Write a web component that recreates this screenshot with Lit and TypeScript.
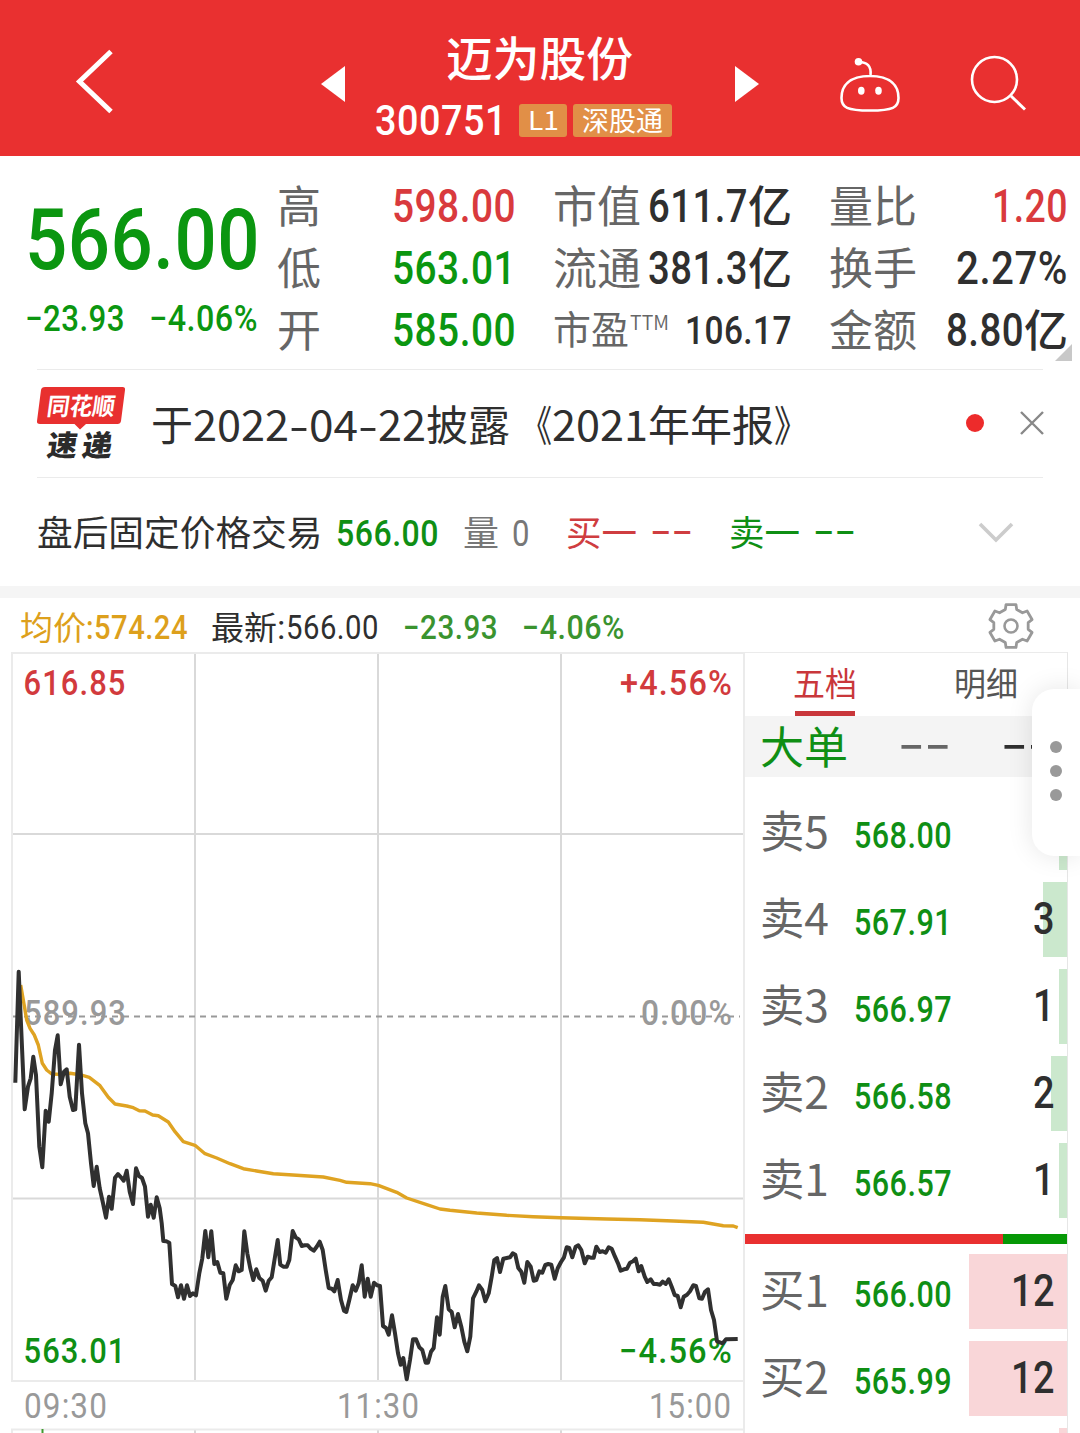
import { LitElement, html, svg, css, nothing } from "lit";
import { customElement } from "lit/decorators.js";

type Series = { ox: number; oy: number; pts: string };

/* One run of text fitted to a fixed advance width. */
const run = (text: string, width: number, size: number, cls = "", height = size) => html`
  <svg class="run ${cls}" width=${width} height=${height}>
    <text x="0" y=${height / 2 + size * (cls.includes("cjk") ? 0.38 : 0.356)} font-size=${size}
      textLength=${width} lengthAdjust="spacingAndGlyphs">${text}</text>
  </svg>`;

/* Series are recorded in thirds of a pixel, relative to the origin of each segment. */
const toPoints = (list: Series[]) =>
  list
    .map((s) =>
      s.pts
        .trim()
        .split(/\s+/)
        .map((p) => {
          const [x, y] = p.split(",").map(Number);
          return `${(s.ox + x / 3).toFixed(1)},${(s.oy + y / 3).toFixed(1)}`;
        })
        .join(" "),
    )
    .join(" ");

const PRICE: Series[] = [
  { ox: 0, oy: 950, pts: `46,398 56,65 74,478 84,410 92,385 100,320 108,375 118,590 127,652 137,482 146,515 155,430 165,300 173,256 182,403 192,365 200,358 209,440 219,480 226,478 237,284 246,430 256,520 264,550 273,640 281,708 290,650 299,715 308,755 318,803 327,740 335,776 345,683 354,672 363,682 371,692 380,662 389,725 399,762 408,655 417,678 426,684 435,710 444,800 452,764 461,803 470,742 479,775 485,820` },
  { ox: 150, oy: 1130, pts: `40,333 49,334 58,338 66,462 76,468 84,502 93,466 102,506 111,466 120,498 129,490 138,496 148,430 157,385 166,303 175,382 184,304 193,402 202,396 211,428 220,430 229,506 239,465 248,450 257,406 266,424 275,420 283,304 292,370 301,415 310,450 319,418 328,444 338,452 347,482 356,452 365,442 375,380 383,330 391,404 400,410 410,410 418,390 428,303 437,322 446,328 455,348 464,346 473,346 482,356 491,362 500,350 509,335 518,360 527,420 536,474 545,476 553,484 563,450 573,510 582,542 589,546 598,510 608,466 617,482 626,460 635,406 644,500 653,446 662,500 672,458 681,466 690,468 699,588 708,594 716,614 726,556 735,610 744,670 752,704 760,684 770,748 780,690 789,628 798,628 808,652 817,660 827,698 834,698 843,665 851,654 861,562 869,614 878,500` },
  { ox: 440, oy: 1180, pts: `16,318 26,388 35,396 44,442 54,402 64,440 73,485 82,514 91,470 99,355 109,335 117,316 127,330 136,364 146,340 155,290 163,240 171,234 180,276 190,236 200,234 210,232 218,220 226,224 235,264 244,275 253,308 262,246 272,260 281,302 289,300 298,274 307,278 316,255 325,252 334,254 344,296 353,265 363,246 372,232 380,202 388,204 397,232 407,200 415,196 424,210 434,250 443,230 452,233 461,233 469,200 479,216 488,214 497,218 506,202 515,206 525,230 534,250 542,272 552,268 561,266 570,248 579,244 587,236 596,274 604,258 614,290 622,306 632,298 641,312 650,312 660,314 668,305 677,312 686,298 695,320 704,345 713,348 722,382 731,350 741,344 750,334 760,316 768,318 778,355 786,356 795,335 804,328 813,390 822,420 831,484 848,490 858,478 893,477` },
];

const AVERAGE: Series[] = [
  { ox: 0, oy: 950, pts: `62,105 70,150 80,210 90,235 103,255 115,285 127,340 140,360 155,372 180,373 210,370 240,374 268,382 300,407 325,442 345,462 380,468 400,473 418,482 435,483 458,495 475,497 505,516 525,545` },
  { ox: 150, oy: 1130, pts: `100,35 135,46 165,71 200,84 240,101 280,116 320,123 370,131 440,136 520,141 570,151 590,157 660,161 685,166 740,187 770,204 830,224 870,237` },
  { ox: 440, oy: 1180, pts: `30,91 110,99 200,106 280,110 363,113 500,117 600,119 700,123 790,127 850,137 880,138 893,143` },
];

const GEAR = Array.from({ length: 6 }, (_, k) =>
  [[17.5, -19], [22, -13], [22, 13], [17.5, 19]]
    .map(([r, d]) => {
      const a = ((k * 60 - 90 + d) * Math.PI) / 180;
      return `${(24 + r * Math.cos(a)).toFixed(2)},${(24 + r * Math.sin(a)).toFixed(2)}`;
    })
    .join(" "),
).join(" ");

const runStyles = css`
  svg { display: block; flex: none; }
  .run { overflow: visible; fill: currentColor; font-family: Roboto, "Noto Sans CJK SC", sans-serif; font-weight: 500; letter-spacing: 0.035em; }
  .cjk { font-family: "Noto Sans CJK SC", sans-serif; font-weight: 400; letter-spacing: 0; }
`;

@customElement("quote-header")
class QuoteHeader extends LitElement {
  static styles = [runStyles, css`
    :host { display: flex; height: 156px; background: #e93030; color: #fff; }
    .medium { font-weight: 500; }
    .prev { margin-left: 190px; }
    .names { display: flex; flex-direction: column; padding-top: 34px; width: 300px; }
    .title { padding-left: 71px; height: 65px; }
    .codes { display: flex; align-items: center; gap: 6px; height: 42px; }
    .badge { display: flex; align-items: center; justify-content: center; box-sizing: border-box; height: 33px; border-radius: 3px; background: #e18f47; }
    .l1 { width: 48px; margin-left: 6px; }
    .link { width: 99px; }
  `];
  render() {
    return html`
      <svg width="120" height="156" viewBox="0 0 120 156"><path d="M111 51.5 79.5 81.5 111 111.5" fill="none" stroke="#fff" stroke-width="5" /></svg>
      <svg class="prev" width="65" height="156" viewBox="310 0 65 156"><path d="M321 84 345 66V102Z" fill="#fff" /></svg>
      <div class="names">
        <div class="title">${run("迈为股份", 187, 46.5, "cjk medium", 48)}</div>
        <div class="codes">
          ${run("300751", 132, 42)}
          <span class="badge l1">${run("L1", 31, 26, "cjk")}</span>
          <span class="badge link">${run("深股通", 81, 27, "cjk")}</span>
        </div>
      </div>
      <svg width="125" height="156" viewBox="675 0 125 156"><path d="M759 84 735 66V102Z" fill="#fff" /></svg>
      <svg width="130" height="156" viewBox="800 0 130 156">
        <path d="M870 76C891 76 898.500 86 898.500 98 898.500 107.500 893 110.500 870 110.500 847 110.500 841.500 107.500 841.500 98 841.500 86 849 76 870 76ZM870.500 75C871.500 66 867 62 859 62" fill="none" stroke="#fff" stroke-width="2.600" />
        <circle cx="858.500" cy="61.800" r="3.800" fill="#fff" />
        <ellipse cx="861.300" cy="90.700" rx="3.300" ry="4" fill="#fff" /><ellipse cx="878.500" cy="90.700" rx="3.300" ry="4" fill="#fff" />
      </svg>
      <svg width="110" height="156" viewBox="930 0 110 156"><path d="M1011 96 1025 109.500" stroke="#fff" stroke-width="3" /><circle cx="994.500" cy="79.500" r="22.500" fill="none" stroke="#fff" stroke-width="2.600" /></svg>
    `;
  }
}

@customElement("quote-stats")
class QuoteStats extends LitElement {
  static styles = [runStyles, css`
    :host { display: flex; height: 213px; color: #2f2f2f; position: relative; }
    .medium { font-weight: 500; }
    .label { color: #666; }
    .light { color: #666; font-weight: 350; }
    .green { color: #0b9610; }
    .red { color: #d93a3d; }
    .price { display: flex; flex-direction: column; gap: 19px; width: 252px; padding: 40px 0 0 25px; }
    .changes { display: flex; gap: 24px; }
    .table { display: flex; gap: 37px; padding-top: 18.5px; }
    .col { width: 239px; }
    .row { display: flex; align-items: center; justify-content: space-between; height: 62px; }
    .pair { display: flex; align-items: center; }
    .ttm { margin: 0 0 15px 1px; }
    .corner { position: absolute; right: 8px; bottom: 8px; }
  `];
  render() {
    const row = (label: unknown, value: unknown) => html`<div class="row"><span class="pair">${label}</span><span class="pair">${value}</span></div>`;
    const yi = run("亿", 44, 44, "cjk medium");
    return html`
      <div class="price green">
        ${run("566.00", 235, 85)}
        <div class="changes">${run("−23.93", 100, 36)}${run("−4.06%", 109, 36)}</div>
      </div>
      <div class="table">
        <div class="col">
          ${row(run("高", 44, 44, "cjk label"), run("598.00", 124, 45.5, "red"))}
          ${row(run("低", 44, 44, "cjk label"), run("563.01", 124, 45.5, "green"))}
          ${row(run("开", 44, 44, "cjk label"), run("585.00", 124, 45.5, "green"))}
        </div>
        <div class="col">
          ${row(run("市值", 88, 44, "cjk label"), [run("611.7", 100, 45.5), yi])}
          ${row(run("流通", 88, 44, "cjk label"), [run("381.3", 100, 45.5), yi])}
          ${row([run("市盈", 76, 38.5, "cjk label"), run("TTM", 39, 20, "cjk light ttm")], run("106.17", 107, 39.5))}
        </div>
        <div class="col">
          ${row(run("量比", 88, 44, "cjk label"), run("1.20", 76, 45.5, "red"))}
          ${row(run("换手", 88, 44, "cjk label"), run("2.27%", 112, 45.5))}
          ${row(run("金额", 88, 44, "cjk label"), [run("8.80", 78, 45.5), yi])}
        </div>
      </div>
      <svg class="corner" width="17" height="17" viewBox="0 0 17 17"><path d="M17 0V17H0Z" fill="#c8c8c8" /></svg>
    `;
  }
}

@customElement("quote-news")
class QuoteNews extends LitElement {
  static styles = [runStyles, css`
    :host { display: block; padding: 0 37px; color: #2f2f2f; }
    .news { display: flex; align-items: center; height: 107px; border-top: 1px solid #ebebeb; border-bottom: 1px solid #ebebeb; }
    .brand { font-family: "Noto Sans CJK SC", sans-serif; font-weight: 900; margin: -2px 0 0 -1px; overflow: visible; }
    .headline { display: flex; margin: 2px 0 0 25px; }
    .open { margin-left: 11px; }
    .dot { width: 18px; height: 18px; border-radius: 50%; background: #ed2b2b; margin: -1px 35px 0 auto; }
    .close { margin: -1px -2px 0 0; }
    .after { display: flex; align-items: center; height: 108px; padding-top: 1px; box-sizing: border-box; }
    .green { color: #0f8f14; }
    .red { color: #cf3d40; }
    .gray { color: #777; }
    .thin { font-weight: 400; }
    .wide { margin-left: 24px; }
    .narrow { margin-left: 13px; }
    .group { margin-left: 36px; }
    .dash { font-weight: 500; position: relative; top: -4px; }
    .fold { margin: 0 29px 0 auto; }
  `];
  render() {
    return html`
      <div class="news">
        <svg class="brand" width="90" height="76" viewBox="36 385 90 76">
          <path d="M45 387H122.500Q125.500 387 125 390L121 421Q120.500 424 117.500 424H86L80 429.500 74.500 424H40Q36.500 424 37 421L41 390Q41.500 387 45 387Z" fill="#e8302f" />
          <text transform="translate(46 414.500) skewX(-8)" font-size="24" textLength="68" lengthAdjust="spacingAndGlyphs" font-weight="700" fill="#fff">同花顺</text>
          <text transform="translate(46 455.500) skewX(-8)" font-size="29" textLength="30" lengthAdjust="spacingAndGlyphs" fill="#2b2b2b">速</text>
          <text transform="translate(81 455.500) skewX(-8)" font-size="29" textLength="30" lengthAdjust="spacingAndGlyphs" fill="#2b2b2b">递</text>
        </svg>
        <div class="headline">
          ${run("于", 42, 42, "cjk")}${run("2022", 96, 42, "cjk")}${run("-", 20, 42, "cjk")}${run("04", 49, 42, "cjk")}${run("-", 20, 42, "cjk")}${run("22", 48, 42, "cjk")}${run("披露", 84, 42, "cjk")}${run("《", 31, 42, "cjk open")}${run("2021", 96, 42, "cjk")}${run("年年报", 126, 42, "cjk")}${run("》", 34, 42, "cjk")}
        </div>
        <span class="dot"></span>
        <svg class="close" width="26" height="26" viewBox="0 0 26 26"><path d="M2 2 24 24M24 2 2 24" stroke="#888" stroke-width="2.400" /></svg>
      </div>
      <div class="after">
        ${run("盘后固定价格交易", 285.5, 35.7, "cjk")}
        ${run("566.00", 103, 36, "green narrow")}
        ${run("量", 36, 35.7, "cjk gray wide")}
        ${run("0", 18, 36, "gray thin narrow")}
        ${run("买一", 71, 35.7, "cjk red group")}${run("--", 43, 36, "cjk red narrow dash")}
        ${run("卖一", 71, 35.7, "cjk green group")}${run("--", 43, 36, "cjk green narrow dash")}
        <svg class="fold" width="36" height="22" viewBox="0 0 36 22"><path d="M2 2 18 18 34 2" fill="none" stroke="#ccc" stroke-width="3.600" /></svg>
      </div>
    `;
  }
}

@customElement("minute-chart")
class MinuteChart extends LitElement {
  static styles = css`
    :host { display: block; width: 745px; flex: none; }
    .chart { display: block; }
    .num { font-family: Roboto, sans-serif; font-weight: 500; font-size: 35px; letter-spacing: 0.035em; }
    .axis { font-weight: 400; }
    .price { fill: none; stroke: #303030; stroke-width: 4; stroke-linejoin: round; }
    .avg { fill: none; stroke: #dfa322; stroke-width: 3.4; stroke-linejoin: round; }
    .grid { stroke: #d9d9d9; stroke-width: 2; }
    .frame { fill: none; stroke: #ebebeb; stroke-width: 2; }
    .zero { stroke: #999; stroke-width: 1.8; stroke-dasharray: 6 5; }
  `;
  render() {
    const label = (text: string, x: number, cy: number, w: number, fill: string, cls = "") =>
      svg`<text class="num ${cls}" x=${x} y=${cy + 12} textLength=${w} lengthAdjust="spacingAndGlyphs" fill=${fill}>${text}</text>`;
    return html`
      <svg class="chart" width="745" height="781" viewBox="0 652 745 781">
        <path class="grid" d="M195 653V1381M378 653V1381M561 653V1381M12 834H744M12 1198.500H744M195 1430V1433M378 1430V1433M561 1430V1433" />
        <path class="frame" d="M12 653H744V1381H12ZM12 1434V1429.500H744V1434M744 1380V1430" />
        <path class="zero" d="M13 1016.500H740" />
        <path d="M42.500 1429V1433" stroke="#3f9a2e" stroke-width="2" />
        ${label("616.85", 23.5, 683, 103, "#d23a3d")}
        ${label("+4.56%", 620, 683, 113, "#d23a3d")}
        ${label("589.93", 24, 1012.5, 103, "#999")}
        ${label("0.00%", 641, 1012.5, 92, "#999")}
        ${label("563.01", 23.5, 1350.5, 103, "#0f8f14")}
        ${label("−4.56%", 619, 1350.5, 114, "#0f8f14")}
        ${label("09:30", 24, 1405.5, 84, "#999", "axis")}
        ${label("11:30", 337, 1405.5, 83, "#999", "axis")}
        ${label("15:00", 649, 1405.5, 83, "#999", "axis")}
        <polyline class="avg" points=${toPoints(AVERAGE)} />
        <polyline class="price" points=${toPoints(PRICE)} />
      </svg>
    `;
  }
}

@customElement("order-book")
class OrderBook extends LitElement {
  static styles = [runStyles, css`
    :host { display: block; box-sizing: border-box; width: 323px; height: 781px; overflow: hidden; border-top: 1px solid #ebebeb; border-right: 1px solid #e6e6e6; color: #2f2f2f; }
    .run { position: relative; }
    .tabs { display: flex; height: 63px; }
    .tab { display: flex; flex-direction: column; align-items: center; justify-content: space-between; width: 161px; padding: 14px 1px 0 0; box-sizing: border-box; color: #555; }
    .on { color: #c9373b; }
    .line { width: 60px; height: 5px; background: #c9373b; }
    .big { display: flex; align-items: center; height: 61px; padding-left: 15px; background: #f4f4f4; }
    .label { color: #666; top: -1px; }
    .dash { margin-left: 50px; top: -5px; font-weight: 500; }
    .sells { padding-top: 11.5px; }
    .row { position: relative; display: flex; align-items: center; height: 87px; padding: 0 12px 0 15px; }
    .bar { position: absolute; right: 0; top: 6px; height: 75px; }
    .sell { background: #cbe8cd; }
    .buy { background: #f9d6d8; }
    .green { color: #0f8f14; }
    .cost { margin: 5px auto 0 25px; }
    .split { display: flex; height: 10px; margin: 10.5px 0 3.5px; background: #069806; }
    .share { background: #e93030; }
  `];
  render() {
    const row = (label: string, price: string, qty: string, bar: number, side: string) => html`
      <div class="row">
        <span class="bar ${side}" style="width:${bar}px"></span>
        ${run(label, 69, 44, "cjk label")}
        ${price ? run(price, 98, 36, "green cost") : nothing}
        ${qty ? run(qty, qty.length * 22, 43.5) : nothing}
      </div>`;
    return html`
      <div class="tabs">
        <div class="tab on">${run("五档", 64, 32.5, "cjk")}<span class="line"></span></div>
        <div class="tab">${run("明细", 64, 32.5, "cjk")}</div>
      </div>
      <div class="big">${run("大单", 88, 44, "cjk green")}${run("--", 53, 44, "cjk label dash")}${run("--", 53, 44, "cjk dash")}</div>
      <div class="sells">
        ${row("卖5", "568.00", "", 8, "sell")}
        ${row("卖4", "567.91", "3", 24, "sell")}
        ${row("卖3", "566.97", "1", 8, "sell")}
        ${row("卖2", "566.58", "2", 16, "sell")}
        ${row("卖1", "566.57", "1", 8, "sell")}
      </div>
      <div class="split"><span class="share" style="width:80%"></span></div>
      ${row("买1", "566.00", "12", 98, "buy")}
      ${row("买2", "565.99", "12", 98, "buy")}
      <div class="row"><span class="bar buy" style="width:8px"></span></div>
    `;
  }
}

@customElement("app-root")
class AppRoot extends LitElement {
  static styles = [runStyles, css`
    :host { display: block; position: relative; width: 1080px; height: 1433px; overflow: hidden; background: #fff; color: #2f2f2f; font-family: Roboto, "Noto Sans CJK SC", sans-serif; }
    .thin { font-weight: 400; }
    .band { height: 12px; background: #f5f5f5; }
    .summary { display: flex; align-items: center; box-sizing: border-box; height: 54px; padding: 5px 45px 0 20px; }
    .gold { color: #dda01c; }
    .green { color: #3a932f; }
    .latest { margin-left: 23px; }
    .gap { margin-left: 24px; }
    .gear { margin: -3px 0 0 auto; }
    .main { display: flex; }
    .handle { position: absolute; top: 689px; right: 0; width: 48px; height: 167px; box-sizing: border-box; padding-bottom: 3px; display: flex; flex-direction: column; align-items: center; justify-content: center; gap: 12px; border-radius: 22px 0 0 22px; background: #fff; box-shadow: 0 0 26px rgba(0, 0, 0, 0.1); }
    .pip { width: 12px; height: 12px; border-radius: 50%; background: #999; }
  `];
  render() {
    return html`
      <quote-header></quote-header>
      <quote-stats></quote-stats>
      <quote-news></quote-news>
      <div class="band"></div>
      <div class="summary">
        ${run("均价", 66, 33, "cjk gold")}${run(":", 8, 33, "gold")}${run("574.24", 94, 33, "gold")}
        ${run("最新", 66, 33, "cjk latest")}${run(":", 9, 33, "thin")}${run("566.00", 93, 33, "thin")}
        ${run("−23.93", 95, 33, "green gap")}${run("−4.06%", 103, 33, "green gap")}
        <svg class="gear" width="48" height="48" viewBox="0 0 48 48"><polygon points=${GEAR} fill="none" stroke="#999" stroke-width="2.800" stroke-linejoin="round" /><circle cx="24" cy="24" r="6.500" fill="none" stroke="#999" stroke-width="2.600" /></svg>
      </div>
      <div class="main">
        <minute-chart></minute-chart>
        <order-book></order-book>
      </div>
      <div class="handle"><span class="pip"></span><span class="pip"></span><span class="pip"></span></div>
    `;
  }
}
